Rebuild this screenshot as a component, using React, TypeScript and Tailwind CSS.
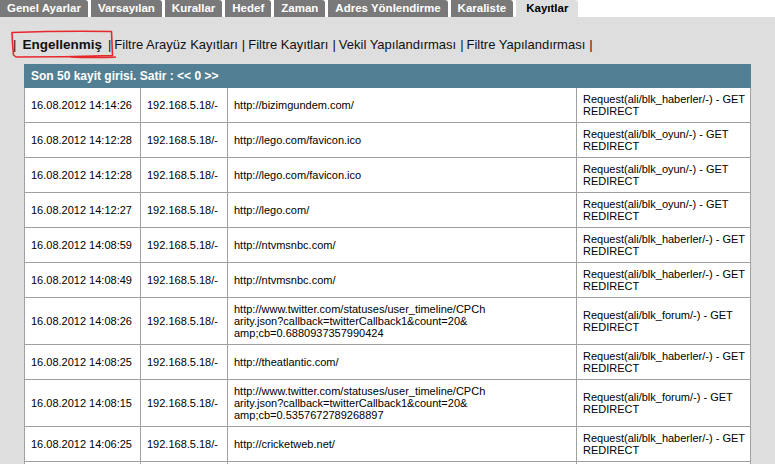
import React from 'react';

const tabs = ['Genel Ayarlar', 'Varsayılan', 'Kurallar', 'Hedef', 'Zaman', 'Adres Yönlendirme', 'Karaliste'];

const links = ['Filtre Arayüz Kayıtları', 'Filtre Kayıtları', 'Vekil Yapılandırması', 'Filtre Yapılandırması'];

type Row = { time: string; url: string[]; req: string };

const rows: Row[] = [
    { time: '16.08.2012 14:14:26', url: ['http://bizimgundem.com/'], req: 'haberler' },
    { time: '16.08.2012 14:12:28', url: ['http://lego.com/favicon.ico'], req: 'oyun' },
    { time: '16.08.2012 14:12:28', url: ['http://lego.com/favicon.ico'], req: 'oyun' },
    { time: '16.08.2012 14:12:27', url: ['http://lego.com/'], req: 'oyun' },
    { time: '16.08.2012 14:08:59', url: ['http://ntvmsnbc.com/'], req: 'haberler' },
    { time: '16.08.2012 14:08:49', url: ['http://ntvmsnbc.com/'], req: 'haberler' },
    {
        time: '16.08.2012 14:08:26',
        url: [
            'http://www.twitter.com/statuses/user_timeline/CPCh',
            'arity.json?callback=twitterCallback1&count=20&',
            'amp;cb=0.6880937357990424',
        ],
        req: 'forum',
    },
    { time: '16.08.2012 14:08:25', url: ['http://theatlantic.com/'], req: 'haberler' },
    {
        time: '16.08.2012 14:08:15',
        url: [
            'http://www.twitter.com/statuses/user_timeline/CPCh',
            'arity.json?callback=twitterCallback1&count=20&',
            'amp;cb=0.5357672789268897',
        ],
        req: 'forum',
    },
    { time: '16.08.2012 14:06:25', url: ['http://cricketweb.net/'], req: 'haberler' },
];

const cell = 'border border-[#a0a0a0] px-[6px] py-[5px] align-middle leading-[12px] whitespace-nowrap';

export default function App() {
    return (
        <div className="w-[775px] h-[464px] overflow-hidden bg-[#dedede] font-['Liberation_Sans',Arial,sans-serif] text-[11px] text-black">
            <div className="flex h-[17px] bg-white">
                {tabs.map((t) => (
                    <div
                        key={t}
                        className="mr-[3px] flex items-center rounded-tr-[3px] bg-[#797979] px-[7px] text-[11.5px] font-bold text-white"
                    >
                        {t}
                    </div>
                ))}
                <div className="flex items-center rounded-tr-[3px] bg-[#dedede] px-[10px] text-[11.5px] font-bold text-black">
                    Kayıtlar
                </div>
            </div>

            <div className="relative flex h-[47px] items-center pl-[13px] pt-[9px] text-[13px] text-[#111]">
                <span>|</span>
                <span className="mx-[6px] font-bold text-[13.5px]">Engellenmiş</span>
                <span>|</span>
                {links.map((l) => (
                    <React.Fragment key={l}>
                        <span className="ml-[3px] mr-[4px]">{l}</span>
                        <span>|</span>
                    </React.Fragment>
                ))}
                <svg className="absolute left-0 top-0" width="130" height="64" viewBox="0 0 130 64">
                    <path
                        d="M12 15.5 C40 14.5 80 14 111.5 14.5 L112.5 38.5 C80 39.5 45 40 16 40 L13.5 38 L12.5 26 Z M70 40 C90 40.5 105 41 116 40"
                        fill="none"
                        stroke="#e8272b"
                        strokeWidth="1.6"
                        strokeLinejoin="round"
                    />
                </svg>
            </div>

            <div className="pl-[24px]">
                <table className="w-[726px] table-fixed border-collapse bg-white">
                    <colgroup>
                        <col className="w-[116px]" />
                        <col className="w-[87px]" />
                        <col className="w-[349px]" />
                        <col className="w-[174px]" />
                    </colgroup>
                    <thead>
                        <tr className="h-[23px] bg-[#537f94]">
                            <th colSpan={4} className="border border-[#537f94] px-[6px] text-left align-middle text-[12px] font-bold text-white">
                                Son 50 kayit girisi. Satir : &lt;&lt; 0 &gt;&gt;
                            </th>
                        </tr>
                    </thead>
                    <tbody>
                        {rows.map((r, i) => (
                            <tr key={i}>
                                <td className={cell}>{r.time}</td>
                                <td className={cell}>192.168.5.18/-</td>
                                <td className={cell}>
                                    {r.url.map((u, j) => (
                                        <div key={j}>{u}</div>
                                    ))}
                                </td>
                                <td className={cell}>
                                    <div>Request(ali/blk_{r.req}/-) - GET</div>
                                    <div>REDIRECT</div>
                                </td>
                            </tr>
                        ))}
                        <tr className="h-[35px]">
                            <td className={cell}></td>
                            <td className={cell}></td>
                            <td className={cell}></td>
                            <td className={cell}></td>
                        </tr>
                    </tbody>
                </table>
            </div>
        </div>
    );
}
